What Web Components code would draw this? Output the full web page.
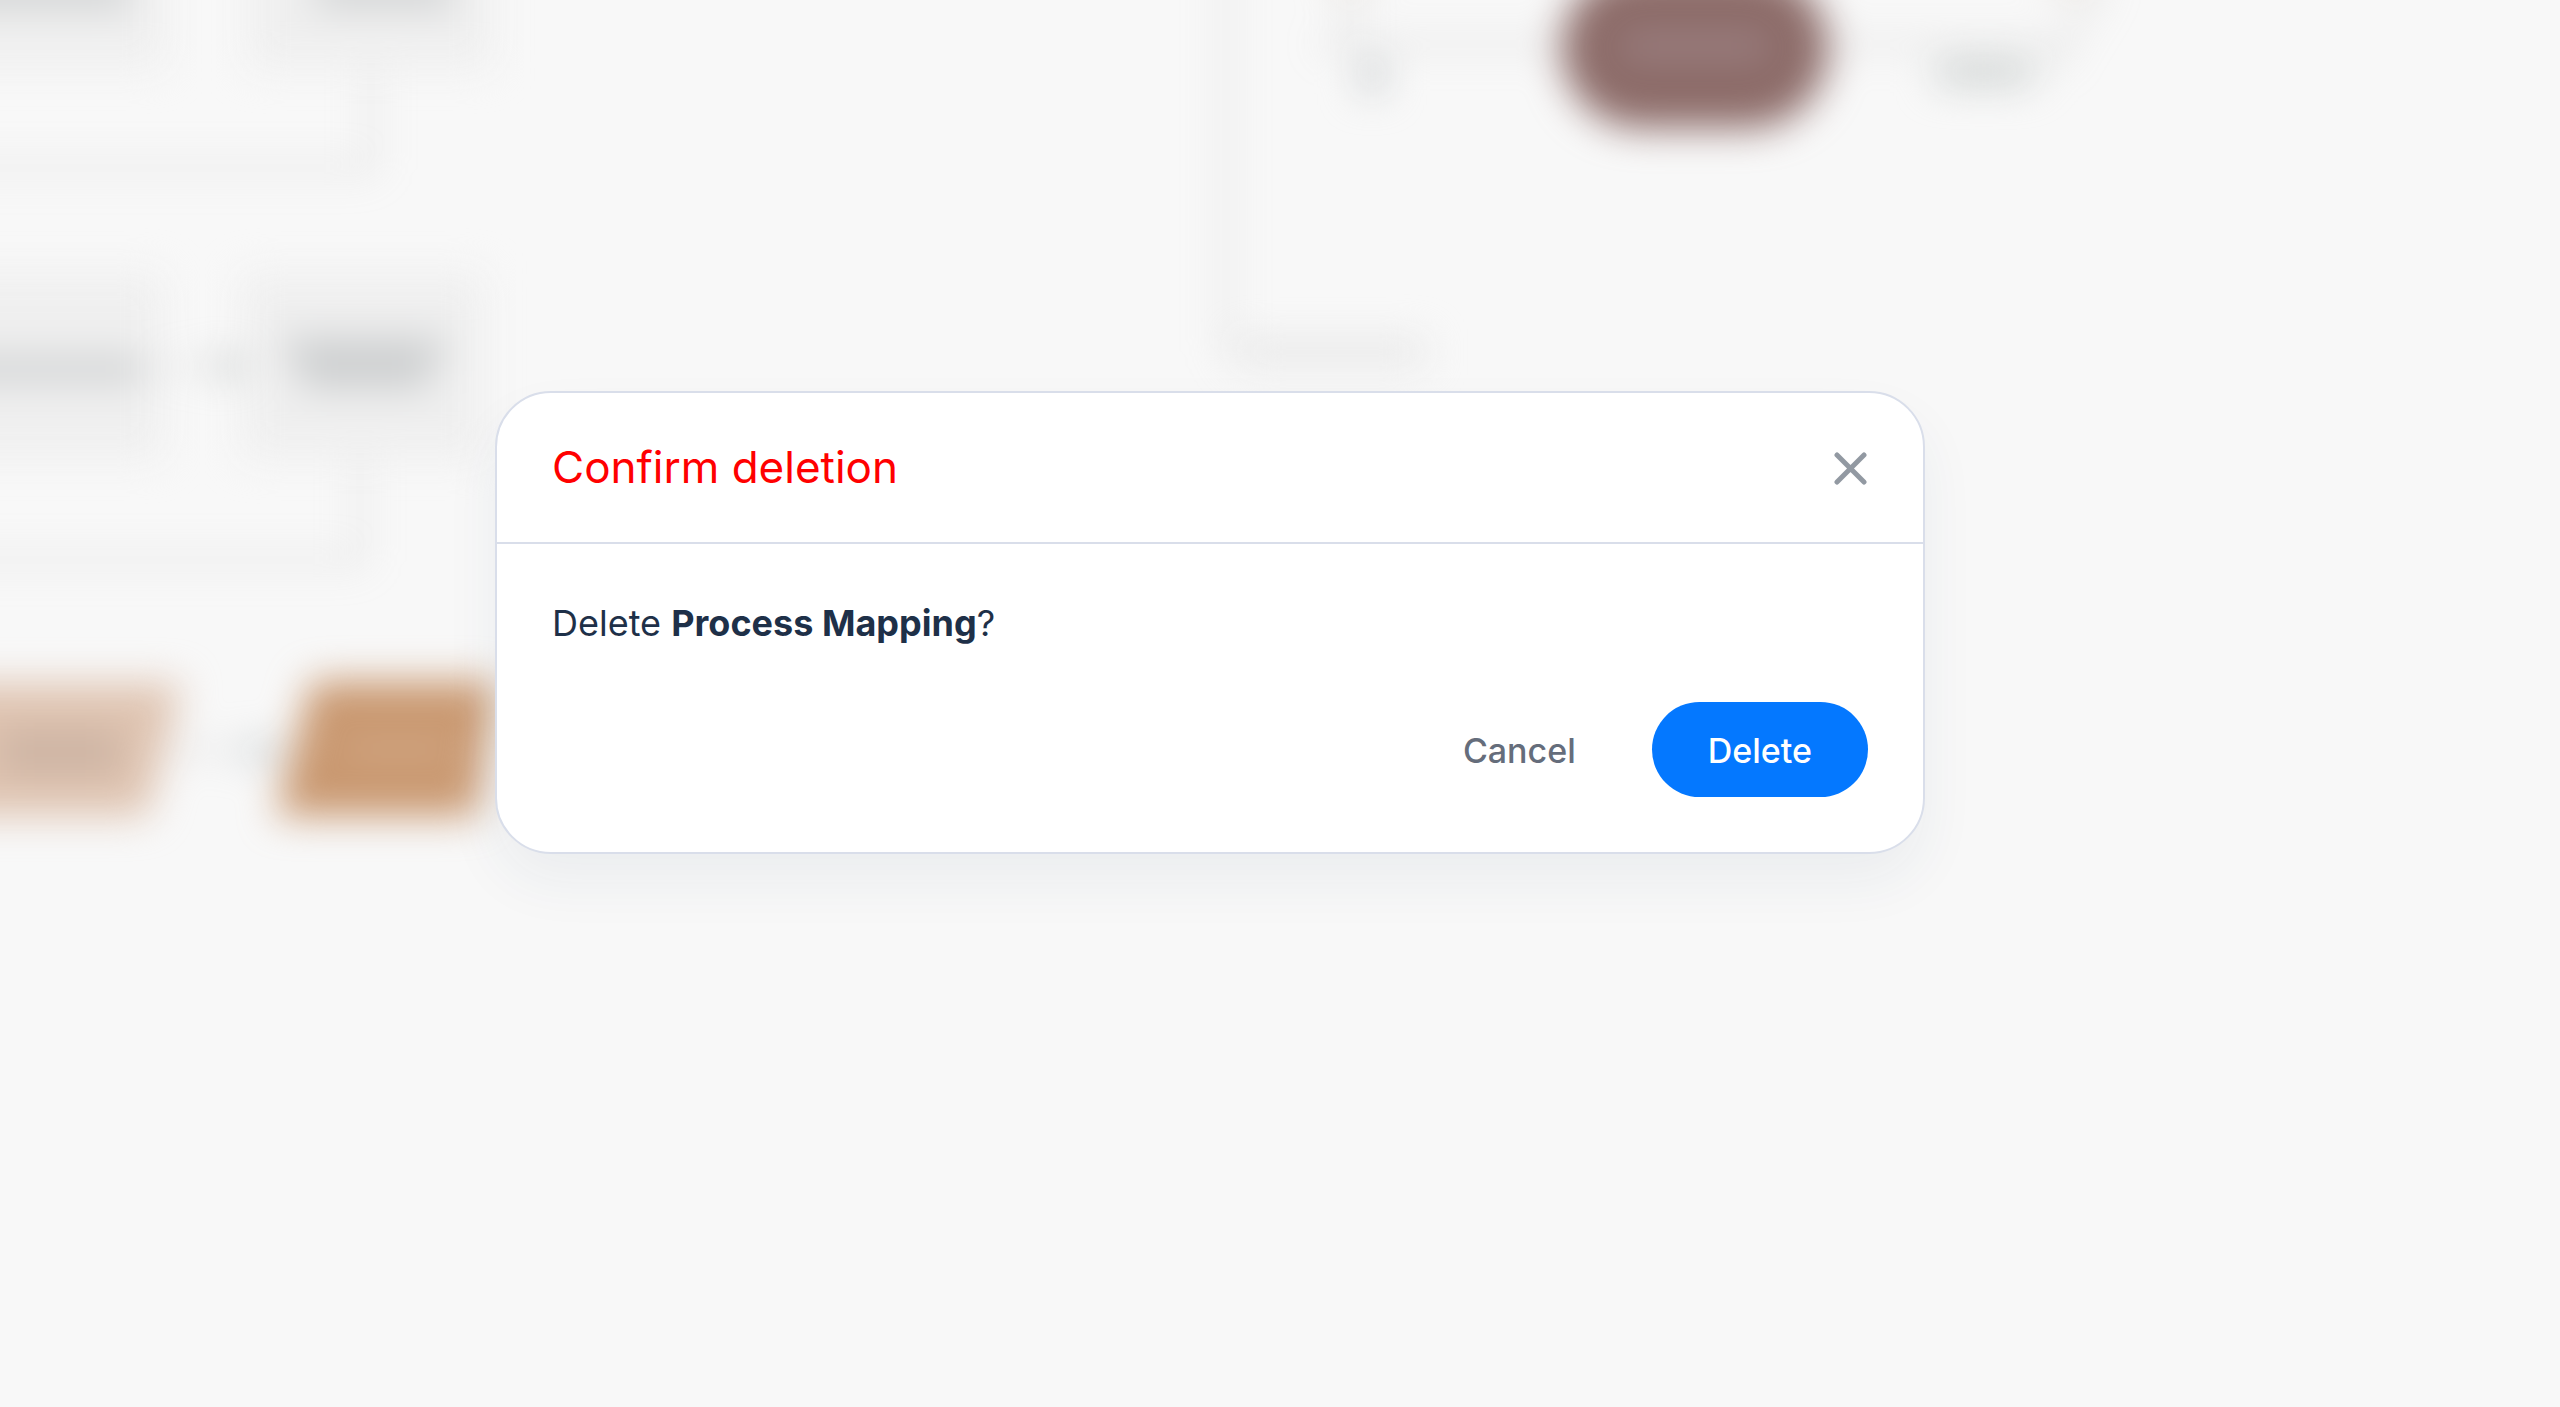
<!DOCTYPE html>
<html lang="en">
<head>
<meta charset="utf-8">
<title>Confirm deletion</title>
<style>
html, body { margin: 0; height: 100%; }
body { background: #f8f8f8; font-family: Inter, "Liberation Sans", sans-serif; }
</style>
</head>
<body>
<modal-stage>
  <flow-canvas slot="backdrop"></flow-canvas>
  <confirm-dialog>
    <span slot="title">Confirm deletion</span>
    <span>Delete <b>Process Mapping</b>?</span>
    <pill-button slot="actions" variant="plain">Cancel</pill-button>
    <pill-button slot="actions" variant="primary">Delete</pill-button>
  </confirm-dialog>
</modal-stage>
<script>
const define = (name, html) => {
  const template = document.createElement('template');
  template.innerHTML = html;
  customElements.define(name, class extends HTMLElement {
    constructor() {
      super();
      this.attachShadow({ mode: 'open' }).append(template.content.cloneNode(true));
    }
  });
};

define('modal-stage', `
<style>
:host { display: flex; align-items: center; justify-content: center; position: relative; min-height: 100vh; overflow: hidden; box-sizing: border-box; padding: 0 140px 162px 0; }
::slotted([slot=backdrop]) { position: absolute; inset: 0; }
</style>
<slot name="backdrop"></slot><slot></slot>`);

/* Process diagram, out of focus behind the dialog */
define('flow-canvas', `
<style>
:host { display: block; overflow: hidden; }
svg { display: block; overflow: hidden; }
</style>
<svg width="2560" height="1407" viewBox="0 0 2560 1407" aria-hidden="true">
  <defs><filter id="soft" filterUnits="userSpaceOnUse" x="-200" y="-200" width="2960" height="1807" color-interpolation-filters="sRGB"><feGaussianBlur stdDeviation="19"/></filter></defs>
  <g filter="url(#soft)">
    <g fill="none" stroke="#b8b8b8" stroke-width="3">
      <path d="M371 60V168H-100M360 455V560H-100M1226 -100V350H1420"/>
      <path d="M1320 44H1570M1820 44H2060M1350 -30V44M2105 -20L2050 70M160 366H240M170 750H290"/>
    </g>
    <path d="M1240 352H1425" stroke="#e6e6e6" stroke-width="24"/>
    <g fill="#efefef">
      <rect x="-150" y="-90" width="315" height="158"/>
      <rect x="248" y="-90" width="244" height="158"/>
      <rect x="-150" y="274" width="313" height="184"/>
      <rect x="242" y="274" width="242" height="184"/>
    </g>
    <g fill="#cbcdce">
      <rect x="-60" y="-22" width="190" height="27"/>
      <rect x="316" y="-22" width="136" height="27"/>
      <rect x="-60" y="358" width="204" height="22"/>
      <rect x="286" y="338" width="158" height="22"/>
      <rect x="300" y="362" width="130" height="26"/>
    </g>
    <path d="M222 354L246 366L222 378Z" fill="#a9b0ae"/>
    <path d="M-100 683H182L147 816H-100Z" fill="#dfc4b1"/>
    <rect x="0" y="732" width="120" height="40" fill="#cbb2a2"/>
    <path d="M254 740L280 752L254 764Z" fill="#a8b6ba"/>
    <path d="M312 681H496L476 816H276Z" fill="#c99870"/>
    <rect x="346" y="742" width="106" height="14" fill="#d5ad8d"/>
    <rect x="1562" y="-32" width="266" height="160" rx="80" fill="#8c6b68"/>
    <rect x="1622" y="36" width="146" height="20" fill="#a08689"/>
    <rect x="1360" y="60" width="24" height="32" fill="#c9cdcf"/>
    <rect x="1936" y="62" width="96" height="22" fill="#c9cecd"/>
    <path d="M1326 -30H1376L1350 -6ZM2044 -30H2096L2070 -6Z" fill="#ddd5cb"/>
  </g>
</svg>`);

define('confirm-dialog', `
<style>
:host { display: block; position: relative; box-sizing: border-box; width: 1430px; max-width: 100%; background: #fff; border: 2px solid #d9deea; border-radius: 56px; box-shadow: 0 28px 56px rgba(40, 60, 110, .06); color: #1e3048; }
header { display: flex; align-items: center; justify-content: space-between; padding: 48px 55px; border-bottom: 2px solid #d9deea; }
h2 { margin: 0; font-size: 44px; line-height: 53px; font-weight: 400; color: #f00; }
header button { display: flex; padding: 0; border: 0; background: none; color: #9299a2; }
main { display: flex; flex-direction: column; gap: 55px; padding: 55px; }
p { margin: 0; font-size: 36px; line-height: 48px; }
footer { display: flex; justify-content: flex-end; gap: 20px; }
</style>
<header>
  <h2><slot name="title"></slot></h2>
  <button type="button" aria-label="Close"><svg width="34" height="34" viewBox="0 0 34 34" fill="none" stroke="currentColor" stroke-width="5" stroke-linecap="round"><path d="M3 4L30 31M30 4L3 31"/></svg></button>
</header>
<main>
  <p><slot></slot></p>
  <footer><slot name="actions"></slot></footer>
</main>`);

define('pill-button', `
<style>
:host { display: block; }
button { display: block; height: 95px; padding: 2px 56px 0; border: 0; border-radius: 48px; font: 500 34px/48px Inter, "Liberation Sans", sans-serif; background: none; color: #656d7b; }
:host([variant=primary]) button { background: #0478ff; color: #fff; }
</style>
<button type="button"><slot></slot></button>`);
</script>
</body>
</html>
